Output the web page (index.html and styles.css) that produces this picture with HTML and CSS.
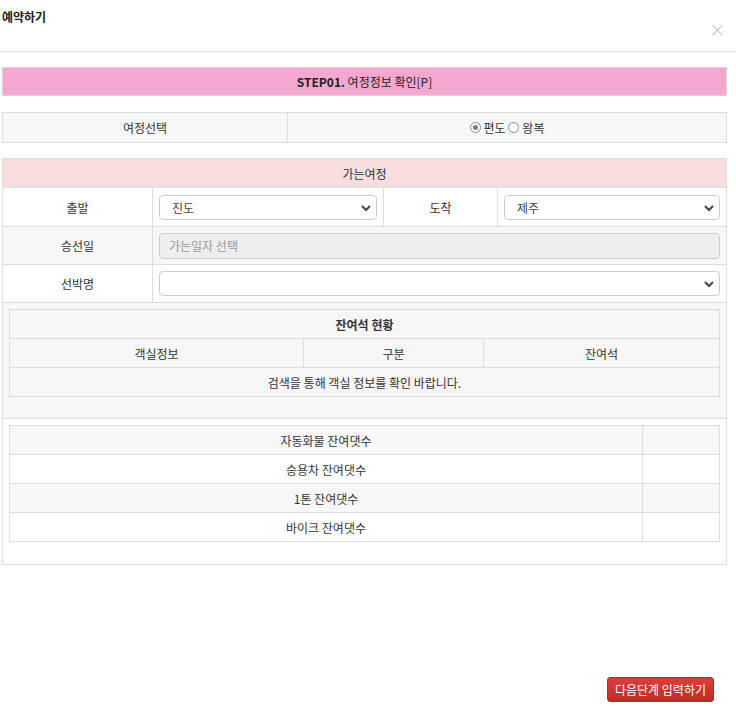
FILE: index.html
```html
<!DOCTYPE html>
<html>
  <head>
    <meta charset="utf-8">
    <link rel="stylesheet" href="styles.css">
  </head>
  <body>
    <div class="modal-header">
      <h4 class="modal-title">예약하기</h4>
      <span class="close">&times;</span>
    </div>
    <div class="modal-body">
      <div class="step-bar"><b>STEP01.</b> 여정정보 확인[P]</div>

      <table class="grid trip-type">
        <colgroup><col class="w-trip"><col></colgroup>
        <tr>
          <td class="head-cell">여정선택</td>
          <td class="head-cell">
            <label class="radio"><input type="radio" name="trip" checked> 편도</label>
            <label class="radio"><input type="radio" name="trip"> 왕복</label>
          </td>
        </tr>
      </table>

      <table class="grid route">
        <colgroup><col class="w-label"><col class="w-field"><col class="w-label2"><col></colgroup>
        <tr>
          <th colspan="4" class="pink-head">가는여정</th>
        </tr>
        <tr class="row-tall">
          <td>출발</td>
          <td class="field">
            <div class="select-wrap">
              <select><option>진도</option></select>
              <svg class="chev" width="10" height="8" viewBox="0 0 10 8"><path d="M1 2 L5 6 L9 2" fill="none" stroke="#444" stroke-width="2"/></svg>
            </div>
          </td>
          <td>도착</td>
          <td class="field">
            <div class="select-wrap">
              <select><option>제주</option></select>
              <svg class="chev" width="10" height="8" viewBox="0 0 10 8"><path d="M1 2 L5 6 L9 2" fill="none" stroke="#444" stroke-width="2"/></svg>
            </div>
          </td>
        </tr>
        <tr class="row-grey">
          <td>승선일</td>
          <td colspan="3" class="field"><input class="date-input" type="text" placeholder="가는일자 선택" readonly></td>
        </tr>
        <tr>
          <td>선박명</td>
          <td colspan="3" class="field">
            <div class="select-wrap">
              <select><option></option></select>
              <svg class="chev" width="10" height="8" viewBox="0 0 10 8"><path d="M1 2 L5 6 L9 2" fill="none" stroke="#444" stroke-width="2"/></svg>
            </div>
          </td>
        </tr>
        <tr class="row-grey">
          <td colspan="4" class="nest-cell nest-seat">
            <table class="grid inner">
              <colgroup><col class="w-room"><col class="w-kind"><col></colgroup>
              <tr class="row-grey"><th colspan="3">잔여석 현황</th></tr>
              <tr>
                <td>객실정보</td>
                <td>구분</td>
                <td>잔여석</td>
              </tr>
              <tr class="row-grey"><td colspan="3">검색을 통해 객실 정보를 확인 바랍니다.</td></tr>
            </table>
          </td>
        </tr>
        <tr>
          <td colspan="4" class="nest-cell nest-car">
            <table class="grid inner">
              <colgroup><col><col class="w-count"></colgroup>
              <tr class="row-grey"><td>자동화물 잔여댓수</td><td></td></tr>
              <tr><td>승용차 잔여댓수</td><td></td></tr>
              <tr class="row-grey"><td>1톤 잔여댓수</td><td></td></tr>
              <tr><td>바이크 잔여댓수</td><td></td></tr>
            </table>
          </td>
        </tr>
      </table>
    </div>
    <div class="modal-footer">
      <button class="btn-next">다음단계 입력하기</button>
    </div>
  </body>
</html>
```

FILE: styles.css
```css
body {
    margin: 0;
    font-family: "Noto Sans CJK KR", "Noto Sans", sans-serif;
    font-size: 12px;
    color: #333;
    background: #fff;
}
.modal-header {
    position: relative;
    height: 52px;
    border-bottom: 1px solid #e5e5e5;
    box-sizing: border-box;
}
.modal-title {
    margin: 0;
    padding: 9px 0 0 2px;
    font-size: 12px;
    font-weight: bold;
    line-height: 16px;
    color: #222;
}
.close {
    position: absolute;
    right: 10px;
    top: 20px;
    font-size: 21px;
    line-height: 21px;
    color: #c8c8c8;
    font-family: "DejaVu Sans", sans-serif;
    font-weight: 300;
}
.modal-body {
    padding: 15px 0 0 2px;
    width: 725px;
}
.step-bar {
    height: 29px;
    box-sizing: border-box;
    background: #f4a8cf;
    border: 1px solid #e2cfd8;
    text-align: center;
    line-height: 27px;
    color: #222;
}
.step-bar b {
    font-weight: bold;
}
.grid {
    width: 100%;
    border-collapse: collapse;
    table-layout: fixed;
    font-size: 12px;
}
.grid td,
.grid th {
    border: 1px solid #ddd;
    text-align: center;
    padding: 0;
    font-weight: normal;
    height: 29px;
    vertical-align: middle;
    box-sizing: border-box;
}
.trip-type {
    margin-top: 16px;
}
.trip-type td {
    height: 30px;
}
.head-cell {
    background: #f7f7f7;
}
.w-trip {
    width: 285px;
}
.radio {
    display: inline-flex;
    align-items: center;
    gap: 3px;
}
.radio input {
    appearance: none;
    -webkit-appearance: none;
    width: 11px;
    height: 11px;
    margin: 0;
    border: 1px solid #8a8a8a;
    border-radius: 50%;
    background: #fff;
    box-sizing: border-box;
    position: relative;
}
.radio input:checked::after {
    content: "";
    position: absolute;
    left: 2px;
    top: 2px;
    width: 5px;
    height: 5px;
    border-radius: 50%;
    background: #7a7a7a;
}
.route {
    margin-top: 15px;
}
.route th.pink-head {
    background: #f7dfe0;
    height: 29px;
}
.route > tbody > tr > td {
    height: 38px;
}
.route > tbody > tr.row-tall > td {
    height: 39px;
}
.row-grey > td,
.row-grey > th {
    background: #f7f7f7;
}
.w-label {
    width: 150px;
}
.w-field {
    width: 231px;
}
.w-label2 {
    width: 114px;
}
.route td.field {
    padding: 0 6px;
}
.route td.nest-cell {
    padding: 0 6px;
}
.select-wrap {
    position: relative;
}
.select-wrap select {
    appearance: none;
    -webkit-appearance: none;
    display: block;
    width: 100%;
    height: 25px;
    border: 1px solid #ccc;
    border-radius: 4px;
    background: #fff;
    padding: 0 12px;
    font-family: inherit;
    font-size: 12px;
    color: #444;
    box-sizing: border-box;
}
.chev {
    position: absolute;
    right: 6px;
    top: 9px;
}
.date-input {
    display: block;
    width: 100%;
    height: 26px;
    border: 1px solid #ccc;
    border-radius: 4px;
    background: #eee;
    padding: 0 9px;
    font-family: inherit;
    font-size: 12px;
    box-sizing: border-box;
}
.date-input::placeholder {
    color: #999;
}
.route > tbody > tr > td.nest-seat {
    height: 116px;
    vertical-align: top;
    padding-top: 6px;
}
.route > tbody > tr > td.nest-car {
    height: 146px;
    vertical-align: top;
    padding-top: 6px;
}
.inner td,
.inner th {
    height: 29px;
}
.inner tr:first-child > th {
    font-weight: bold;
}
.w-room {
    width: 294px;
}
.w-kind {
    width: 180px;
}
.w-count {
    width: 77px;
}
.modal-footer {
    display: flex;
    justify-content: flex-end;
    padding: 112px 22px 0 0;
}
.btn-next {
    width: 107px;
    height: 25px;
    border: 1px solid #b22a27;
    border-radius: 3px;
    background: linear-gradient(#d9403c, #c02a26);
    color: #fff;
    font-family: inherit;
    font-size: 12px;
    padding: 0;
}
```
